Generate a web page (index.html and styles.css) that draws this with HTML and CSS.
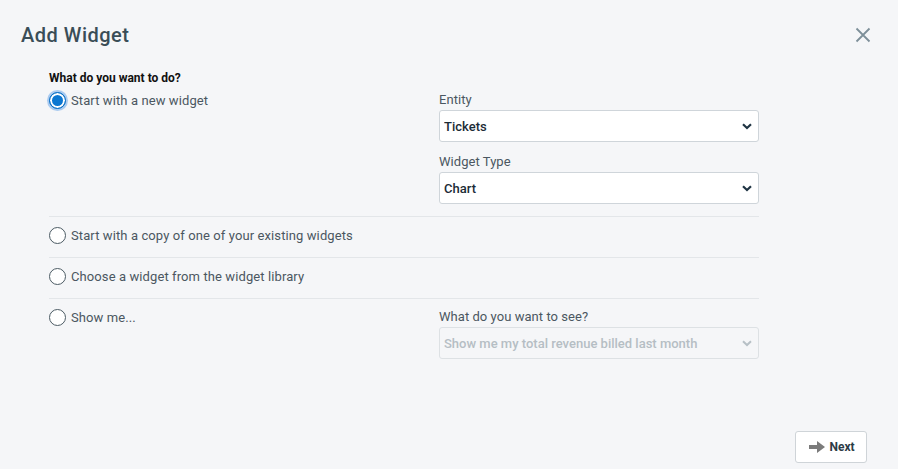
FILE: index.html
```html
<!DOCTYPE html>
<html>
<head>
<meta charset="utf-8">
<link rel="stylesheet" href="styles.css">
</head>
<body>
<div class="dialog">
  <header class="head">
    <h1 class="title">Add Widget</h1>
    <button class="close" aria-label="Close">
      <svg width="16" height="16" viewBox="0 0 16 16"><path d="M1.5 1.5 L14.5 14.5 M14.5 1.5 L1.5 14.5" stroke="#7d8f99" stroke-width="1.8" fill="none"/></svg>
    </button>
  </header>
  <main class="body">
    <div class="question">What do you want to do?</div>
    <div class="row first">
      <label class="opt"><input type="radio" name="w" checked><span>Start with a new widget</span></label>
      <div class="side">
        <div class="field">
          <div class="flabel">Entity</div>
          <div class="sel">
            <select><option>Tickets</option></select>
            <svg class="chev" width="10" height="7" viewBox="0 0 10 7"><path d="M1 1.2 L5 5 L9 1.2" stroke="#1f3443" stroke-width="2.2" fill="none"/></svg>
          </div>
        </div>
        <div class="field">
          <div class="flabel">Widget Type</div>
          <div class="sel">
            <select><option>Chart</option></select>
            <svg class="chev" width="10" height="7" viewBox="0 0 10 7"><path d="M1 1.2 L5 5 L9 1.2" stroke="#1f3443" stroke-width="2.2" fill="none"/></svg>
          </div>
        </div>
      </div>
    </div>
    <div class="row">
      <label class="opt"><input type="radio" name="w"><span>Start with a copy of one of your existing widgets</span></label>
    </div>
    <div class="row">
      <label class="opt"><input type="radio" name="w"><span>Choose a widget from the widget library</span></label>
    </div>
    <div class="row last">
      <label class="opt"><input type="radio" name="w"><span>Show me...</span></label>
      <div class="side">
        <div class="field">
          <div class="flabel">What do you want to see?</div>
          <div class="sel disabled">
            <select disabled><option>Show me my total revenue billed last month</option></select>
            <svg class="chev" width="10" height="7" viewBox="0 0 10 7"><path d="M1 1.2 L5 5 L9 1.2" stroke="#b7c0c6" stroke-width="2" fill="none"/></svg>
          </div>
        </div>
      </div>
    </div>
  </main>
  <footer class="foot">
    <button class="next">
      <svg width="16" height="12" viewBox="0 0 16 12"><path d="M0 4 H8 V0 L16 6 L8 12 V8 H0 Z" fill="#7b7b7b"/></svg>
      <span>Next</span>
    </button>
  </footer>
</div>
</body>
</html>
```
FILE: styles.css
```css
html, body {
  margin: 0;
  padding: 0;
  background: #f5f6f8;
  font-family: Roboto, "Liberation Sans", Arial, sans-serif;
}
.dialog {
  width: 898px;
  height: 469px;
  box-sizing: border-box;
  display: flex;
  flex-direction: column;
  position: relative;
}
.head {
  display: flex;
  justify-content: space-between;
  align-items: center;
  padding: 22px 27px 0 21px;
  height: 26px;
}
.title {
  margin: 0;
  font-size: 20px;
  font-weight: 500;
  color: #3a4d57;
  letter-spacing: 0.5px;
}
.close {
  background: none;
  border: 0;
  padding: 0;
  width: 16px;
  height: 16px;
  display: flex;
}
.body {
  padding: 0 0 0 49px;
  width: 710px;
  flex: 1;
}
.question {
  margin-top: 22px;
  font-size: 12px;
  font-weight: 700;
  color: #111;
  line-height: 16px;
}
.row {
  display: flex;
  border-bottom: 1px solid #e3e6e9;
  padding: 8px 0 12px;
}
.row.first {
  padding-top: 4px;
  padding-bottom: 12px;
}
.row.last {
  border-bottom: 0;
}
.opt {
  width: 390px;
  display: flex;
  align-items: center;
  height: 20px;
  font-size: 13px;
  color: #4b5761;
  letter-spacing: 0.1px;
}
.opt input {
  appearance: none;
  -webkit-appearance: none;
  margin: 0 5px 0 0;
  width: 17px;
  height: 17px;
  border-radius: 50%;
  border: 1.5px solid #4c5b64;
  background: #fff;
  box-sizing: border-box;
  flex: none;
}
.opt input:checked {
  border: 1px solid #0a6fc4;
  background: #0b77d1;
  box-shadow: inset 0 0 0 2px #fff, 0 0 0 2px rgba(80, 150, 230, 0.45);
}
.side {
  width: 320px;
  display: flex;
  flex-direction: column;
  gap: 10px;
}
.flabel {
  height: 20px;
  line-height: 20px;
  font-size: 13px;
  color: #4b5761;
  letter-spacing: 0.05px;
}
.sel {
  position: relative;
  height: 32px;
}
.sel select {
  appearance: none;
  -webkit-appearance: none;
  width: 100%;
  height: 32px;
  box-sizing: border-box;
  border: 1px solid #cfd5da;
  border-radius: 3px;
  background: #fff;
  font-family: inherit;
  font-size: 13px;
  font-weight: 500;
  color: #1c2b36;
  padding: 0 4px;
}
.sel.disabled select {
  background: #f5f6f8;
  border-color: #dde1e4;
  color: #b5bec4;
  opacity: 1;
}
.chev {
  position: absolute;
  right: 7px;
  top: 13px;
  pointer-events: none;
}
.foot {
  display: flex;
  justify-content: flex-end;
  padding: 0 31px 6px 0;
}
.next {
  width: 72px;
  height: 32px;
  border: 1px solid #cfd4d8;
  border-radius: 3px;
  background: #fff;
  display: flex;
  align-items: center;
  justify-content: center;
  gap: 4px;
  font-family: inherit;
  font-size: 12px;
  font-weight: 700;
  color: #2d3b45;
  padding: 0 0 0 2px;
}
```
